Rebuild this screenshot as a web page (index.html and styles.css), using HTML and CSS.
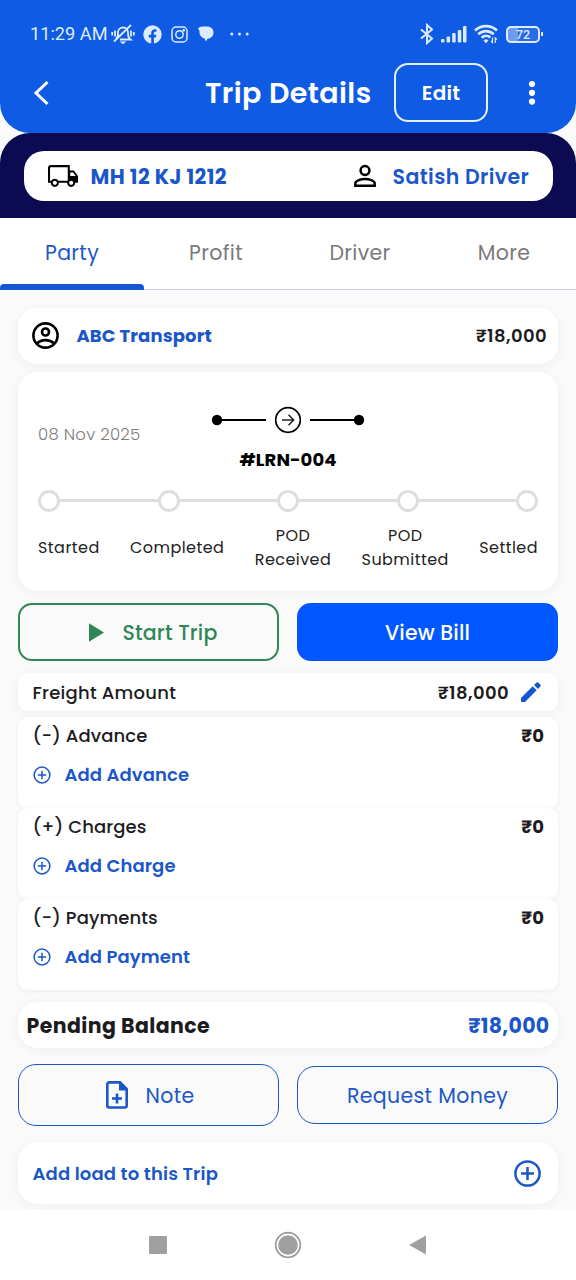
FILE: index.html
```html
<!DOCTYPE html>
<html lang="en">
<head>
<meta charset="utf-8">
<title>Trip Details</title>
<link rel="stylesheet" href="styles.css">
</head>
<body>
<header class="header">
  <div class="status">
    <div class="status-left">
      <span class="clock">11:29 AM</span>
      <svg class="i-bell" width="24" height="22" viewBox="0 0 24 22" fill="none" stroke="currentColor" stroke-width="1.800"><path d="M4.500 16.500c2.500-2 2.500-3.500 2.500-7a5 5 0 0 1 10 0c0 3.500 0 5 2.500 7H9M20 2 3 18.500M4 7.500v6M1.200 9v3.500M20 7.500v6M22.800 9v3.500"/><path d="M8.500 18.500h7l-3.500 2.800z" fill="currentColor" stroke="none"/></svg>
      <svg class="i-fb" width="19" height="19" viewBox="0 0 19 19"><circle cx="9.500" cy="9.500" r="9.200" fill="currentColor"/><path d="M8.200 19v-6.500H5.800V9.800h2.400V8c0-2.500 1.500-3.700 3.500-3.700h1.700v2.400h-1.200c-1 0-1.300.6-1.300 1.400v1.700h2.500l-.5 2.700h-2V19z" fill="#0f5be3"/></svg>
      <svg class="i-ig" width="17" height="17" viewBox="0 0 17 17" fill="none" stroke="currentColor" stroke-width="1.500"><rect x="1" y="1" width="15" height="15" rx="4"/><circle cx="8.500" cy="8.500" r="3.700"/><circle cx="12.700" cy="4.300" r=".6" fill="currentColor"/></svg>
      <svg class="i-chat" width="16" height="16" viewBox="0 0 16 16" fill="currentColor"><path d="M0 2.500C1.500.7 3.500.5 6 .5h3c4 0 6.500 2.500 6.500 6S13 12.500 9.500 12.700L8 15.500 6.500 12.500C3 11.500 1 8.500 1.500 5z"/></svg>
      <svg width="19" height="4" viewBox="0 0 19 4" fill="currentColor"><circle cx="1.800" cy="2" r="1.500"/><circle cx="9.500" cy="2" r="1.500"/><circle cx="17.200" cy="2" r="1.500"/></svg>
    </div>
    <div class="status-right">
      <svg class="i-bt" width="14" height="22" viewBox="0 0 14 22" fill="none" stroke="currentColor" stroke-width="2"><path d="m1 6.500 11 9L7 20V2l5 4.500-11 9"/></svg>
      <svg class="i-sig" width="26" height="17" viewBox="0 0 26 17" fill="currentColor"><rect x="0" y="13" width="3.500" height="3.500" rx="1"/><rect x="5.600" y="10.500" width="3.500" height="6" rx="1"/><rect x="11.200" y="7" width="3.500" height="9.500" rx="1"/><rect x="16.800" y="4" width="3.500" height="12.500" rx="1"/><rect x="22" y="0" width="3.500" height="16.500" rx="1"/></svg>
      <svg class="i-wifi" width="24" height="20" viewBox="0 0 24 20" fill="none" stroke="currentColor" stroke-width="2.700"><path d="M1 6.500a16 16 0 0 1 22 0M4.300 10.300a11 11 0 0 1 15.400 0M7.700 13.800a6.300 6.300 0 0 1 8.600-.3"/><path d="m9.500 16.500 2.500-1.500 2.500 1.500-2.500 2.800z" fill="currentColor" stroke="none"/><path d="M18.500 13.500v5l-1.500-1.500M21.300 19v-5l1.500 1.500" stroke-width="1.200"/></svg>
      <span class="battery"><span class="battery-cell">72</span><span class="battery-tip"></span></span>
    </div>
  </div>
  <div class="appbar">
    <svg class="i-back" width="16" height="26" viewBox="0 0 16 26" fill="none" stroke="currentColor" stroke-width="3"><path d="M14.500 2 3 13l11.500 11"/></svg>
    <h1 class="title">Trip Details</h1>
    <button class="edit">Edit</button>
    <svg class="i-more" width="8" height="26" viewBox="0 0 8 26" fill="currentColor"><circle cx="4" cy="4" r="3.100"/><circle cx="4" cy="12.800" r="3.100"/><circle cx="4" cy="21.600" r="3.100"/></svg>
  </div>
</header>

<section class="vehicle">
  <div class="vehicle-pill">
    <svg width="30" height="22" viewBox="0 0 22 16"><path fill="#000" fill-rule="evenodd" d="M19 4h-3V0H2C.9 0 0 .9 0 2v11h2c0 1.660 1.340 3 3 3s3-1.340 3-3h6c0 1.660 1.340 3 3 3s3-1.340 3-3h2V8l-3-4zM5 14.500c-.83 0-1.500-.67-1.500-1.500s.67-1.500 1.500-1.500 1.500.67 1.500 1.500-.67 1.500-1.500 1.500zM14.500 11.500H7.600C7 10.600 6.100 10 5 10s-2 .6-2.600 1.500h-.9V2c0-.3.200-.5.500-.5h12.500zM17 14.500c-.83 0-1.500-.67-1.500-1.500s.67-1.500 1.500-1.500 1.500.67 1.500 1.500-.67 1.500-1.500 1.500zM16.300 8V5.500h2.200L20.300 8z"/></svg>
    <span class="plate">MH 12 KJ 1212</span>
    <svg class="i-person" width="24" height="24" viewBox="0 0 24 24" fill="none" stroke="#000" stroke-width="2.500"><circle cx="12" cy="6.500" r="4.400"/><path d="M2.300 21.700v-2.200c0-3 6-4.500 9.700-4.500s9.700 1.500 9.700 4.500v2.200z"/></svg>
    <span class="driver">Satish Driver</span>
  </div>
</section>

<nav class="tabs">
  <span class="tab tab-active">Party</span>
  <span class="tab">Profit</span>
  <span class="tab">Driver</span>
  <span class="tab">More</span>
</nav>

<main class="content">
  <section class="card party">
    <svg width="27" height="27" viewBox="0 0 27 27" fill="none" stroke="#000" stroke-width="2.600"><circle cx="13.500" cy="13.500" r="12.100"/><circle cx="13.500" cy="10" r="3.500"/><path d="M5 21.500c4.500-4.500 12.500-4.500 17 0"/></svg>
    <span class="party-name">ABC Transport</span>
    <span class="amount party-amount">₹18,000</span>
  </section>

  <section class="card trip">
    <div class="trip-head">
      <span class="date">08 Nov 2025</span>
      <div class="route">
        <svg width="154" height="28" viewBox="0 0 154 28" fill="none" stroke="#000" stroke-width="2"><path d="M6 14h49M99 14h49"/><circle cx="6" cy="14" r="5.200" fill="#000" stroke="none"/><circle cx="148" cy="14" r="5.200" fill="#000" stroke="none"/><circle cx="77" cy="14" r="12.300" stroke-width="1.700"/><path d="M71 14h11.500M77.500 8.700l5.200 5.300-5.200 5.300" stroke-width="1.500" stroke="#222"/></svg>
        <strong class="lrn">#LRN-004</strong>
      </div>
    </div>
    <div class="track"><i class="dot"></i><i class="bar"></i><i class="dot"></i><i class="bar"></i><i class="dot"></i><i class="bar"></i><i class="dot"></i><i class="bar"></i><i class="dot"></i></div>
    <div class="steps">
      <span>Started</span><span>Completed</span><span>POD<br>Received</span><span>POD<br>Submitted</span><span>Settled</span>
    </div>
  </section>

  <div class="actions">
    <button class="btn start"><svg width="15" height="19" viewBox="0 0 15 19" fill="currentColor"><path d="M0 .3v18.400l15-9.200z"/></svg><span>Start Trip</span></button>
    <button class="btn bill">View Bill</button>
  </div>

  <section class="card freight">
    <span>Freight Amount</span>
    <span class="amount freight-amount">₹18,000</span>
    <svg width="20" height="20" viewBox="0 0 20 20" fill="#1556d3"><path d="M0 16v4h4L15.700 8.200l-4-4zM19.500 4.300c.5-.5.500-1 0-1.500L17.200.5c-.5-.5-1-.5-1.500 0l-2.700 2.500 4 4z"/></svg>
  </section>

  <section class="card entry">
    <div class="entry-row"><span>(-) Advance</span><span class="zero">₹0</span></div>
    <div class="entry-add"><svg width="18" height="18" viewBox="0 0 18 18" fill="none" stroke="currentColor" stroke-width="1.500"><circle cx="9" cy="9" r="7.900"/><path d="M9 4.800v8.400M4.800 9h8.400"/></svg><span>Add Advance</span></div>
  </section>
  <section class="card entry">
    <div class="entry-row"><span>(+) Charges</span><span class="zero">₹0</span></div>
    <div class="entry-add"><svg width="18" height="18" viewBox="0 0 18 18" fill="none" stroke="currentColor" stroke-width="1.500"><circle cx="9" cy="9" r="7.900"/><path d="M9 4.800v8.400M4.800 9h8.400"/></svg><span>Add Charge</span></div>
  </section>
  <section class="card entry">
    <div class="entry-row"><span>(-) Payments</span><span class="zero">₹0</span></div>
    <div class="entry-add"><svg width="18" height="18" viewBox="0 0 18 18" fill="none" stroke="currentColor" stroke-width="1.500"><circle cx="9" cy="9" r="7.900"/><path d="M9 4.800v8.400M4.800 9h8.400"/></svg><span>Add Payment</span></div>
  </section>

  <section class="card pending">
    <span class="pending-label">Pending Balance</span>
    <span class="pending-amount">₹18,000</span>
  </section>

  <div class="actions links">
    <button class="btn outline note"><svg width="22" height="28" viewBox="0 0 22 28"><path d="M3.300 1.400H14L20.700 8v16.500a2 2 0 0 1-2 2H3.300a2 2 0 0 1-2-2V3.400a2 2 0 0 1 2-2z" fill="none" stroke="currentColor" stroke-width="2.600"/><path d="M13 1v8.500h8.500z" fill="currentColor"/><path d="M11 12.500v10M6 17.500h10" stroke="currentColor" stroke-width="2.600"/></svg><span>Note</span></button>
    <button class="btn outline request">Request Money</button>
  </div>

  <section class="card load">
    <span>Add load to this Trip</span>
    <svg width="27" height="27" viewBox="0 0 27 27" fill="none" stroke="currentColor" stroke-width="2.500"><circle cx="13.500" cy="13.500" r="12.100"/><path d="M13.500 7v13M7 13.500h13"/></svg>
  </section>
</main>

<footer class="sysnav">
  <svg width="18" height="18" viewBox="0 0 18 18"><rect width="18" height="18" rx="1" fill="#a0a0a0"/></svg>
  <svg width="28" height="28" viewBox="0 0 28 28"><circle cx="14" cy="14" r="12.300" fill="none" stroke="#999" stroke-width="1.700"/><circle cx="14" cy="14" r="9.800" fill="#a0a0a0"/></svg>
  <svg width="18" height="20" viewBox="0 0 18 20"><path d="M17 .5v19L0 10z" fill="#a0a0a0"/></svg>
</footer>
</body>
</html>
```

FILE: styles.css
```css
* { box-sizing: border-box; }
body {
  margin: 0;
  width: 576px;
  height: 1280px;
  overflow: hidden;
  background: #fafafa;
  font-family: Poppins, Inter, "Noto Sans", sans-serif;
  color: #1c1c1e;
  white-space: nowrap;
}
svg { display: block; flex: none; }
button { font: inherit; letter-spacing: inherit; margin: 0; padding: 0; background: none; cursor: pointer; }

.header { height: 133px; background: #0f5be3; border-radius: 0 0 30px 30px; color: #fff; }
.status { height: 63px; padding: 5px 33px 0 29px; display: flex; justify-content: space-between; align-items: center; color: #dcebff; }
.status-left, .status-right { display: flex; align-items: center; }
.clock { width: 78px; padding-left: 1px; font: 400 18.200px/22px Roboto, sans-serif; }
.i-bell { margin-left: 4px; }
.i-fb { margin-left: 8px; }
.i-ig { margin-left: 9px; }
.i-chat { margin: 0 16px 0 10px; }
.i-sig { margin-left: 7px; }
.i-wifi { margin: 0 8px 0 7px; }
.battery { display: flex; align-items: center; gap: 1px; }
.battery-cell { width: 34px; height: 17px; border: 2px solid #dcebff; border-radius: 5px; text-align: center; font: 500 12.500px/13px Roboto, sans-serif; background: linear-gradient(90deg, #6d9cf2 32%, #2a6be7 32%); }
.battery-tip { width: 2px; height: 4px; background: #dcebff; }

.appbar { height: 59px; display: flex; align-items: center; padding-left: 33px; }
.title { margin: 0 0 0 156px; width: 166px; font-size: 28.500px; line-height: 40px; font-weight: 600; letter-spacing: .4px; }
.edit { margin-left: 23px; width: 94px; height: 59px; border: 2px solid #e4f0ff; border-radius: 14px; color: #fff; font-size: 20px; font-weight: 600; letter-spacing: .2px; }
.i-more { margin-left: 40px; }

.vehicle { height: 85px; background: #0c0b52; border-radius: 30px 30px 0 0; padding: 18px 23.500px; }
.vehicle-pill { height: 50px; background: #fff; border-radius: 20px; display: flex; align-items: center; padding: 0 24px 0 24px; color: #1b57c9; font-size: 20.500px; letter-spacing: .4px; }
.plate { margin-left: 13px; font-weight: 700; }
.i-person { margin-left: auto; }
.driver { margin-left: 16px; width: 136px; font-weight: 600; }

.tabs { height: 72px; background: #fff; border-bottom: 1px solid #c8c9de; display: grid; grid-template-columns: repeat(4, 1fr); font-size: 20.500px; letter-spacing: .35px; color: #7a7a7a; }
.tab { height: 72px; display: flex; align-items: center; justify-content: center; padding-bottom: 3px; }
.tab-active { position: relative; color: #1b57c9; }
.tab-active::after { content: ""; position: absolute; left: 0; right: 0; bottom: 0; height: 6px; background: #1556d3; border-radius: 4px 4px 0 0; }

.content { padding: 18px 18px 0; height: 920px; overflow: hidden; }
.card { background: #fff; box-shadow: 0 2px 12px rgba(0, 0, 0, .05); }
.amount { font-size: 18px; font-weight: 600; letter-spacing: .4px; }
.party { height: 56px; border-radius: 19px; display: flex; align-items: center; padding: 0 11px 1px 14px; }
.party-name { margin-left: 17.500px; font-size: 18px; font-weight: 700; letter-spacing: .1px; color: #1b57c9; }
.party-amount { margin-left: auto; }

.trip { margin-top: 8px; height: 219px; border-radius: 20px; padding: 34px 20px 0; }
.trip-head { display: grid; grid-template-columns: 173px 154px 173px; height: 83px; }
.date { font-size: 16.500px; line-height: 58px; color: #7d7d7d; font-weight: 300; letter-spacing: .25px; }
.route { display: flex; flex-direction: column; align-items: center; color: #000; }
.lrn { margin-top: 13px; font-size: 18px; line-height: 26px; font-weight: 700; letter-spacing: .1px; }
.track { display: flex; align-items: center; height: 23px; }
.dot { width: 22px; height: 22px; border: 3px solid #dedede; border-radius: 50%; }
.bar { flex: 1; height: 3px; background: #dedede; }
.steps { margin-top: 12px; display: flex; justify-content: space-between; align-items: center; text-align: center; font-size: 16px; line-height: 23.500px; letter-spacing: .45px; color: #222; font-weight: 400; }

.actions { margin-top: 12px; display: grid; grid-template-columns: 1fr 1fr; gap: 18px; align-items: center; }
.btn { height: 58px; border-radius: 14px; display: flex; align-items: center; justify-content: center; font-size: 20.500px; font-weight: 500; letter-spacing: .15px; }
.start { border: 2.500px solid #2f8757; color: #2f8757; gap: 19px; padding-left: 9px; }
.bill { border: 0; background: #0057ff; color: #fff; }

.freight { margin-top: 12px; height: 38px; border-radius: 10px; display: flex; align-items: center; padding: 0 17px 0 14.500px; font-size: 18px; font-weight: 500; letter-spacing: .25px; }
.freight-amount { margin: 0 12px 0 auto; }

.entry { height: 91px; border-radius: 10px; padding: 5px 14px 0 14.500px; font-size: 18px; font-weight: 500; letter-spacing: .1px; box-shadow: 0 1px 6px rgba(0, 0, 0, .05); }
.freight + .entry { margin-top: 6px; }
.entry-row { display: flex; justify-content: space-between; line-height: 28px; }
.zero { font-weight: 700; }
.entry-add { display: flex; align-items: center; gap: 14px; margin-top: 10px; line-height: 30px; color: #1b57c9; font-weight: 600; }

.pending { margin-top: 12px; height: 46px; border-radius: 20px; display: flex; align-items: center; justify-content: space-between; padding: 0 8.500px; font-size: 20.500px; font-weight: 700; }
.pending-label { letter-spacing: .4px; }
.pending-amount { letter-spacing: .3px; color: #1b57c9; }
.links { margin-top: 16px; }
.outline { border: 1.500px solid #1b57c9; color: #1b57c9; border-radius: 18px; font-weight: 400; letter-spacing: .35px; }
.note { height: 62px; gap: 17px; padding-left: 4px; }
.load { margin-top: 16px; height: 62px; border-radius: 20px; display: flex; align-items: center; justify-content: space-between; padding: 0 17px 0 14.500px; color: #1b57c9; font-size: 18px; font-weight: 600; letter-spacing: .15px; }

.sysnav { height: 70px; background: #fff; display: flex; align-items: center; justify-content: center; gap: 107px; }
```
